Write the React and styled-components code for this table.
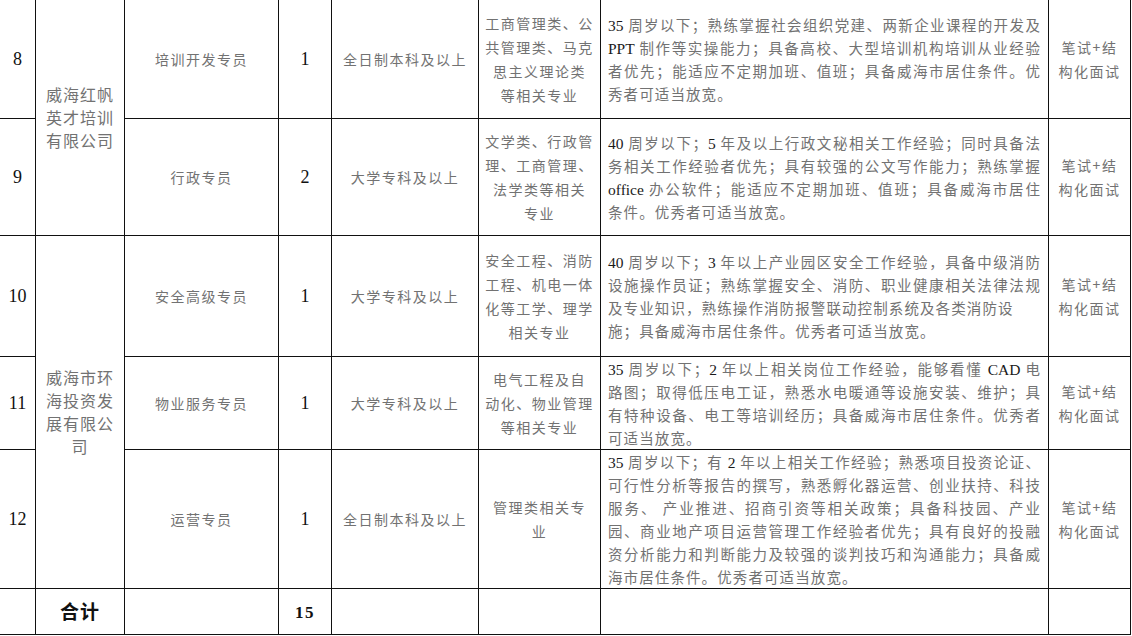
import React from 'react';
import styled, { createGlobalStyle } from 'styled-components';

const Global = createGlobalStyle`
  html, body { margin: 0; padding: 0; background: #fff; }
  body {
    width: 1132px;
    height: 636px;
    overflow: hidden;
    font-family: "Liberation Serif", "Noto Sans CJK SC", serif;
  }
`;

const Sheet = styled.table`
  border-collapse: collapse;
  table-layout: fixed;
  width: 1132px;
  margin: -2px 0 0 -1px;
`;

const Row = styled.tr`
  height: ${(p) => (p.$h ? `${p.$h}px` : 'auto')};
`;

const Cell = styled.td`
  border: 1px solid #111;
  padding: 0 ${(p) => p.$pad ?? 3}px;
  vertical-align: middle;
  text-align: ${(p) => p.$align || 'center'};
  color: #727272;
  font-family: "Noto Sans CJK SC", sans-serif;
  font-size: 14px;
  letter-spacing: 1.5px;
  line-height: 24px;
`;

const Num = styled.span`
  font-family: "Liberation Serif", serif;
  font-size: 18px;
  line-height: 18px;
  color: #111;
  letter-spacing: 0;
`;

const Company = styled.div`
  font-size: 16px;
  line-height: 23px;
  letter-spacing: 1px;
  color: #727272;
`;

const Line = styled.div`
  white-space: nowrap;
`;

const DescLine = styled.div`
  text-align: justify;
  text-align-last: ${(p) => (p.$full ? 'justify' : 'left')};
  line-height: 23px;
  height: 23px;
  letter-spacing: 1.1px;
  font-size: 14.5px;
`;

const Latin = styled.span`
  font-family: "Liberation Serif", serif;
  font-size: 15.5px;
  line-height: 14px;
  color: #1a1a1a;
  letter-spacing: 0;
`;

const TotalLabel = styled.span`
  font-family: "Noto Sans CJK SC", sans-serif;
  font-weight: 700;
  font-size: 19px;
  line-height: 24px;
  letter-spacing: 1px;
  color: #111;
`;

const TotalNum = styled.span`
  font-family: "Liberation Serif", serif;
  font-weight: 700;
  font-size: 17px;
  line-height: 17px;
  color: #111;
`;

const widths = [36, 89, 154, 53, 147, 122, 448, 82];

const rows = [
  {
    no: '8',
    h: 120,
    company: { lines: ['威海红帆', '英才培训', '有限公司'], span: 2 },
    pos: '培训开发专员',
    count: '1',
    edu: '全日制本科及以上',
    major: ['工商管理类、公', '共管理类、马克', '思主义理论类', '等相关专业'],
    desc: [
      '35 周岁以下；熟练掌握社会组织党建、两新企业课程的开发及',
      'PPT 制作等实操能力；具备高校、大型培训机构培训从业经验',
      '者优先；能适应不定期加班、值班；具备威海市居住条件。优',
      '秀者可适当放宽。',
    ],
  },
  {
    no: '9',
    h: 117,
    pos: '行政专员',
    count: '2',
    edu: '大学专科及以上',
    major: ['文学类、行政管', '理、工商管理、', '法学类等相关', '专业'],
    desc: [
      '40 周岁以下；5 年及以上行政文秘相关工作经验；同时具备法',
      '务相关工作经验者优先；具有较强的公文写作能力；熟练掌握',
      'office 办公软件；能适应不定期加班、值班；具备威海市居住',
      '条件。优秀者可适当放宽。',
    ],
  },
  {
    no: '10',
    h: 121,
    company: { lines: ['威海市环', '海投资发', '展有限公', '司'], span: 3 },
    pos: '安全高级专员',
    count: '1',
    edu: '大学专科及以上',
    major: ['安全工程、消防', '工程、机电一体', '化等工学、理学', '相关专业'],
    desc: [
      '40 周岁以下；3 年以上产业园区安全工作经验，具备中级消防',
      '设施操作员证；熟练掌握安全、消防、职业健康相关法律法规',
      { text: '及专业知识，熟练操作消防报警联动控制系统及各类消防设', full: false },
      '施；具备威海市居住条件。优秀者可适当放宽。',
    ],
  },
  {
    no: '11',
    h: 92,
    pos: '物业服务专员',
    count: '1',
    edu: '大学专科及以上',
    major: ['电气工程及自', '动化、物业管理', '等相关专业'],
    desc: [
      '35 周岁以下；2 年以上相关岗位工作经验，能够看懂 CAD 电',
      '路图；取得低压电工证，熟悉水电暖通等设施安装、维护；具',
      '有特种设备、电工等培训经历；具备威海市居住条件。优秀者',
      '可适当放宽。',
    ],
  },
  {
    no: '12',
    h: 139,
    pos: '运营专员',
    count: '1',
    edu: '全日制本科及以上',
    major: ['管理类相关专', '业'],
    desc: [
      '35 周岁以下；有 2 年以上相关工作经验；熟悉项目投资论证、',
      '可行性分析等报告的撰写，熟悉孵化器运营、创业扶持、科技',
      '服务、 产业推进、招商引资等相关政策；具备科技园、产业',
      '园、商业地产项目运营管理工作经验者优先；具有良好的投融',
      '资分析能力和判断能力及较强的谈判技巧和沟通能力；具备威',
      '海市居住条件。优秀者可适当放宽。',
    ],
  },
];

function Mixed({ text }) {
  const parts = text.split(/([A-Za-z0-9]+)/);
  return parts.map((p, i) =>
    /^[A-Za-z0-9]+$/.test(p) ? <Latin key={i}>{p}</Latin> : <React.Fragment key={i}>{p}</React.Fragment>
  );
}

function Desc({ lines }) {
  return lines.map((l, i) => {
    const text = typeof l === 'string' ? l : l.text;
    const full = typeof l === 'string' ? i < lines.length - 1 : l.full;
    return (
      <DescLine key={i} $full={full}>
        <Mixed text={text} />
      </DescLine>
    );
  });
}

export default function App() {
  return (
    <>
      <Global />
      <Sheet>
        <colgroup>
          {widths.map((w, i) => (
            <col key={i} style={{ width: w }} />
          ))}
        </colgroup>
        <tbody>
          {rows.map((r) => (
            <Row key={r.no} $h={r.h}>
              <Cell $pad={0}>
                <Num>{r.no}</Num>
              </Cell>
              {r.company && (
                <Cell rowSpan={r.company.span} $pad={2}>
                  <Company>
                    {r.company.lines.map((l, i) => (
                      <Line key={i}>{l}</Line>
                    ))}
                  </Company>
                </Cell>
              )}
              <Cell>{r.pos}</Cell>
              <Cell $pad={0}>
                <Num>{r.count}</Num>
              </Cell>
              <Cell>{r.edu}</Cell>
              <Cell $pad={2}>
                {r.major.map((l, i) => (
                  <Line key={i}>{l}</Line>
                ))}
              </Cell>
              <Cell $pad={7} $align="left">
                <Desc lines={r.desc} />
              </Cell>
              <Cell $pad={2}>
                <Line>笔试+结</Line>
                <Line>构化面试</Line>
              </Cell>
            </Row>
          ))}
          <Row $h={46}>
            <Cell />
            <Cell>
              <TotalLabel>合计</TotalLabel>
            </Cell>
            <Cell />
            <Cell $pad={0}>
              <TotalNum>15</TotalNum>
            </Cell>
            <Cell />
            <Cell />
            <Cell />
            <Cell />
          </Row>
        </tbody>
      </Sheet>
    </>
  );
}
